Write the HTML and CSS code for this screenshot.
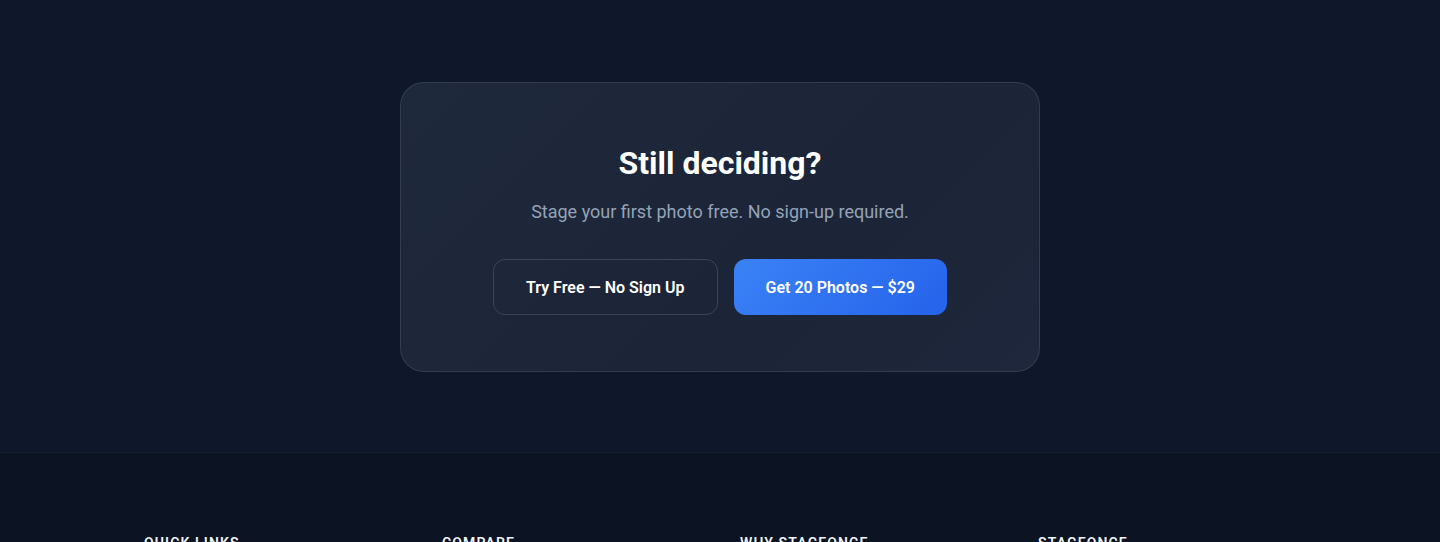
FILE: index.html
```html
<!DOCTYPE html>
<html lang="en">
<head>
<meta charset="utf-8">
<title>StageOnce</title>
<link rel="stylesheet" href="styles.css">
</head>
<body>
<section class="cta">
  <div class="card">
    <h2 class="title">Still deciding?</h2>
    <p class="sub">Stage your first photo free. No sign-up required.</p>
    <div class="actions">
      <a class="btn btn-ghost" href="#">Try Free — No Sign Up</a>
      <a class="btn btn-primary" href="#">Get 20 Photos — $29</a>
    </div>
  </div>
</section>
<footer class="footer">
  <div class="cols">
    <div class="col"><h4 class="col-title">Quick Links</h4></div>
    <div class="col"><h4 class="col-title">Compare</h4></div>
    <div class="col"><h4 class="col-title">Why StageOnce</h4></div>
    <div class="col"><h4 class="col-title">StageOnce</h4></div>
  </div>
</footer>
</body>
</html>
```
FILE: styles.css
```css
* { box-sizing: border-box; }
html, body { margin: 0; padding: 0; }
body {
  background: #0f172a;
  font-family: Roboto, "Noto Sans", "Liberation Sans", sans-serif;
  color: #fff;
  -webkit-font-smoothing: antialiased;
}
.cta {
  padding: 82px 24px 80px;
  display: flex;
  justify-content: center;
  border-bottom: 1px solid #172033;
}
.card {
  width: 640px;
  padding: 60px 40px 56px;
  border: 1px solid rgba(255,255,255,0.1);
  border-radius: 24px;
  background: linear-gradient(135deg, #1e293b 0%, #1c2537 60%, #1e273b 100%);
  text-align: center;
}
.title {
  margin: 0 0 15px;
  font-size: 32px;
  line-height: 40px;
  font-weight: 700;
  color: #fff;
}
.sub {
  margin: 0 0 33px;
  font-size: 18px;
  line-height: 28px;
  color: #94a3b8;
}
.actions {
  display: flex;
  justify-content: center;
  gap: 16px;
}
.btn {
  display: inline-flex;
  align-items: center;
  justify-content: center;
  height: 56px;
  padding: 0 32px;
  border-radius: 12px;
  font-size: 16px;
  font-weight: 600;
  color: #fff;
  text-decoration: none;
}
.btn-ghost {
  border: 1px solid #3a4557;
  background: transparent;
}
.btn-primary {
  background: linear-gradient(135deg, #3b82f6 0%, #2563eb 100%);
}
.footer {
  background: #0c1322;
  padding: 80px 144px 40px;
}
.cols {
  display: grid;
  grid-template-columns: repeat(4, 1fr);
  gap: 40px;
}
.col-title {
  margin: 0;
  font-size: 14px;
  line-height: 20px;
  font-weight: 600;
  letter-spacing: 0.08em;
  text-transform: uppercase;
  color: #f1f5f9;
}
```
